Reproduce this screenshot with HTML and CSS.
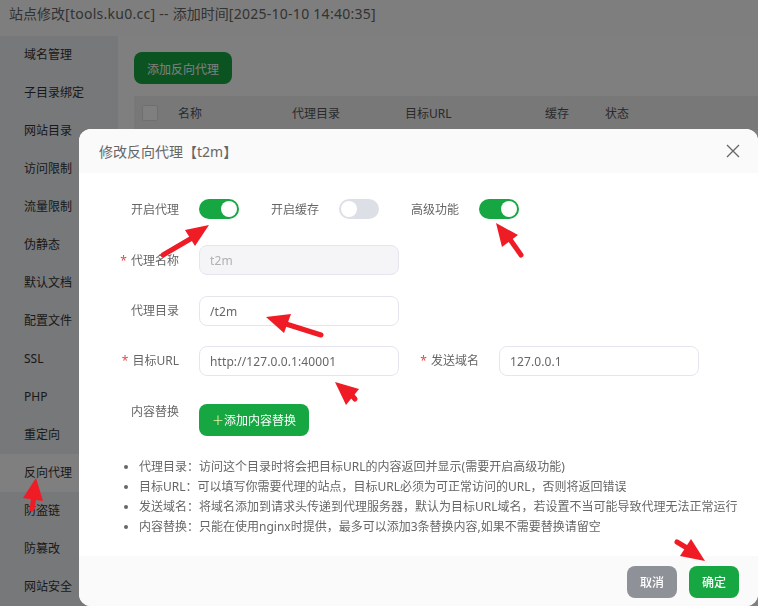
FILE: index.html
```html
<!DOCTYPE html>
<html lang="zh-CN">
<head>
<meta charset="utf-8">
<title>站点修改</title>
<link rel="stylesheet" href="styles.css">
</head>
<body>
<div class="page">
  <header class="page-title">站点修改<span class="latin">[tools.ku0.cc] -- </span>添加时间<span class="latin">[2025-10-10 14:40:35]</span></header>
  <div class="page-body">
    <nav class="side">
      <div class="side-item">域名管理</div>
      <div class="side-item">子目录绑定</div>
      <div class="side-item">网站目录</div>
      <div class="side-item">访问限制</div>
      <div class="side-item">流量限制</div>
      <div class="side-item">伪静态</div>
      <div class="side-item">默认文档</div>
      <div class="side-item">配置文件</div>
      <div class="side-item">SSL</div>
      <div class="side-item">PHP</div>
      <div class="side-item">重定向</div>
      <div class="side-item active">反向代理</div>
      <div class="side-item">防盗链</div>
      <div class="side-item">防篡改</div>
      <div class="side-item">网站安全</div>
    </nav>
    <main class="content">
      <button class="add-btn">添加反向代理</button>
      <div class="table-head">
        <span class="check"></span>
        <span class="col col-name">名称</span>
        <span class="col col-dir">代理目录</span>
        <span class="col col-url">目标URL</span>
        <span class="col col-cache">缓存</span>
        <span class="col">状态</span>
      </div>
    </main>
  </div>
</div>

<div class="scrim"></div>

<section class="modal">
  <div class="modal-head">
    <span class="modal-title">修改反向代理【t2m】</span>
    <svg class="close" width="14" height="14" viewBox="0 0 14 14"><path d="M1 1 13 13M13 1 1 13"/></svg>
  </div>
  <div class="modal-body">
    <div class="row row-switches">
      <label class="lbl">开启代理</label>
      <span class="switch on"></span>
      <label class="lbl lbl-s">开启缓存</label>
      <span class="switch"></span>
      <label class="lbl lbl-s">高级功能</label>
      <span class="switch on"></span>
    </div>
    <div class="row row-name">
      <label class="lbl"><i>*</i>代理名称</label>
      <input class="inp disabled" value="t2m" disabled>
    </div>
    <div class="row row-dir">
      <label class="lbl">代理目录</label>
      <input class="inp" value="/t2m">
    </div>
    <div class="row row-url">
      <label class="lbl"><i>*</i>目标URL</label>
      <input class="inp" value="http://127.0.0.1:40001">
      <label class="lbl lbl-s"><i>*</i>发送域名</label>
      <input class="inp" value="127.0.0.1">
    </div>
    <div class="row row-replace">
      <label class="lbl">内容替换</label>
      <button class="btn-add"><span class="plus">＋</span>添加内容替换</button>
    </div>
    <ul class="notes">
      <li>代理目录：访问这个目录时将会把目标URL的内容返回并显示(需要开启高级功能)</li>
      <li>目标URL：可以填写你需要代理的站点，目标URL必须为可正常访问的URL，否则将返回错误</li>
      <li>发送域名：将域名添加到请求头传递到代理服务器，默认为目标URL域名，若设置不当可能导致代理无法正常运行</li>
      <li>内容替换：只能在使用nginx时提供，最多可以添加3条替换内容,如果不需要替换请留空</li>
    </ul>
  </div>
  <div class="modal-foot">
    <button class="btn btn-cancel">取消</button>
    <button class="btn btn-ok">确定</button>
  </div>
</section>

<svg class="arrows" width="758" height="606" viewBox="0 0 758 606">
  <path class="shaft" d="M163 255 192 238"/>
  <path class="head" d="M209 225 185 230 195 246Z"/>
  <path class="shaft" d="M521 255 509 238"/>
  <path class="head" d="M496 223 518 235 502 247Z"/>
  <path class="shaft" d="M321 335 286 324"/>
  <path class="head" d="M266 317 291 314 284 333Z"/>
  <path class="shaft" d="M355 399 349 392"/>
  <path class="head" d="M335 382 359 389 346 405Z"/>
  <path class="shaft" d="M32 509 34 496"/>
  <path class="head" d="M36 478 43 501 23 498Z"/>
  <path class="shaft" d="M677 542 692 551"/>
  <path class="head" d="M705 561 691 539 680 556Z"/>
</svg>
</body>
</html>
```
FILE: styles.css
```css
* { box-sizing: border-box; }
html, body { margin: 0; height: 100%; overflow: hidden; }
body {
  font-family: "Noto Sans", "Noto Sans CJK SC", sans-serif;
  font-size: 12px;
  color: #444;
  background: #fff;
}
.page { height: 606px; display: flex; flex-direction: column; }
.page-title {
  height: 36px;
  line-height: 28px;
  padding-left: 9px;
  font-size: 14px;
  color: #666;
  background: #fdfdfd;
}
.latin { letter-spacing: .27px; }
.page-body { flex: 1; display: flex; min-height: 0; }
.side { width: 118px; background: #eff0f3; }
.side-item {
  height: 38px;
  line-height: 38px;
  padding-left: 24px;
  color: #333;
}
.active { background: #fff; }
.content { flex: 1; padding: 16px 0 0 16px; }
.add-btn {
  display: block;
  width: 98px;
  height: 32px;
  border: 0;
  border-radius: 8px;
  background: #16a743;
  color: #fff;
  font: inherit;
  padding: 1px 0 0;
}
.table-head {
  display: flex;
  align-items: center;
  height: 34px;
  margin-top: 12px;
  padding-left: 8px;
  background: #f0f0f0;
  color: #555;
}
.check {
  width: 16px;
  height: 16px;
  border: 1px solid #dcdfe6;
  border-radius: 2px;
  background: #fff;
  margin-right: 20px;
}
.col-name { width: 114px; }
.col-dir { width: 113px; }
.col-url { width: 140px; }
.col-cache { width: 60px; }

.scrim { position: fixed; inset: 0; background: rgba(0, 0, 0, .5); }

.modal {
  position: absolute;
  left: 79px;
  top: 129px;
  width: 679px;
  height: 477px;
  display: flex;
  flex-direction: column;
  background: #fff;
  border-radius: 12px;
  overflow: hidden;
  color: #666;
}
.modal-head {
  height: 44px;
  flex: none;
  display: flex;
  align-items: center;
  justify-content: space-between;
  padding: 0 18px 0 20px;
  background: #fafafa;
}
.modal-title { font-size: 14px; color: #666; }
.close path { stroke: #666; stroke-width: 1.3; fill: none; }
.modal-body { flex: 1; min-height: 0; }
.row { display: flex; align-items: flex-start; height: 30px; }
.row-switches { margin-top: 26px; height: 20px; align-items: center; }
.row-name { margin-top: 26px; }
.row-dir { margin-top: 21px; }
.row-url { margin-top: 20px; }
.row-replace { margin-top: 28px; height: 32px; }
.lbl {
  width: 100px;
  margin-right: 20px;
  text-align: right;
  line-height: 22px;
  color: #666;
  flex: none;
}
.row-name .lbl { line-height: 32px; }
.row-dir .lbl, .row-url .lbl { line-height: 30px; }
.lbl-s { width: 80px; }
.lbl i { font-style: normal; color: #e5484d; margin-right: 4px; }
.row-replace .lbl { line-height: 16px; }
.row-switches .lbl { padding-top: 2px; line-height: 20px; height: 22px; }
.switch {
  position: relative;
  width: 40px;
  height: 20px;
  flex: none;
  border-radius: 10px;
  background: #dcdfe6;
}
.switch::after {
  content: "";
  position: absolute;
  top: 2px;
  left: 2px;
  width: 16px;
  height: 16px;
  border-radius: 50%;
  background: #fff;
}
.switch.on { background: #16a743; }
.switch.on::after { left: 22px; }
.inp {
  width: 200px;
  height: 30px;
  flex: none;
  border: 1px solid #e4e5ef;
  border-radius: 8px;
  padding: 0 10px;
  font: inherit;
  letter-spacing: .1px;
  color: #666;
  background: #fff;
  outline: none;
}
.inp.disabled { background: #f5f5f7; color: #b0b0b5; }
.btn-add {
  width: 110px;
  height: 32px;
  border: 0;
  border-radius: 8px;
  background: #16a743;
  color: #fff;
  font: inherit;
  padding: 0;
}
.plus { color: #e8f5a0; }
.notes {
  margin: 21px 0 0;
  padding: 0 0 0 60px;
  line-height: 20px;
  color: #666;
}
.modal-foot {
  height: 50px;
  flex: none;
  display: flex;
  justify-content: flex-end;
  align-items: flex-start;
  gap: 12px;
  padding: 10px 19px 0 0;
  background: #fafafa;
}
.btn {
  width: 50px;
  height: 32px;
  border: 0;
  border-radius: 8px;
  color: #fff;
  font: inherit;
  font-weight: 500;
  padding: 0;
}
.btn-cancel { background: #8f9198; }
.btn-ok { background: #16a743; }

.arrows { position: absolute; left: 0; top: 0; pointer-events: none; }
.shaft { stroke: #ef1b25; stroke-width: 5; stroke-linecap: round; fill: none; }
.head { fill: #ef1b25; }
```
